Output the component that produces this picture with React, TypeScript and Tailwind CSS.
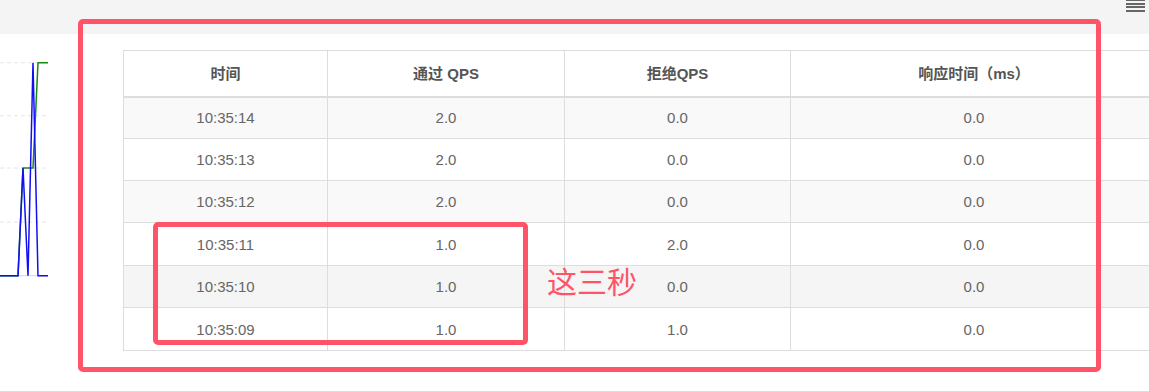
import React from 'react';

const rows = [
  { time: '10:35:14', pass: '2.0', block: '0.0', rt: '0.0', bg: 'bg-[#f9f9f9]', h: 'h-[42px]' },
  { time: '10:35:13', pass: '2.0', block: '0.0', rt: '0.0', bg: 'bg-white', h: 'h-[42px]' },
  { time: '10:35:12', pass: '2.0', block: '0.0', rt: '0.0', bg: 'bg-[#f9f9f9]', h: 'h-[42px]' },
  { time: '10:35:11', pass: '1.0', block: '2.0', rt: '0.0', bg: 'bg-white', h: 'h-[43px]' },
  { time: '10:35:10', pass: '1.0', block: '0.0', rt: '0.0', bg: 'bg-[#f5f5f5]', h: 'h-[42px]' },
  { time: '10:35:09', pass: '1.0', block: '1.0', rt: '0.0', bg: 'bg-white', h: 'h-[43px]' },
];

function MiniChart() {
  const grid = [12.7, 65.7, 118, 172];
  return (
    <svg width="48" height="240" viewBox="0 0 48 240" className="mt-[16px] shrink-0">
      {grid.map((y) => (
        <line key={y} x1="0" x2="48" y1={y} y2={y} stroke="#e6e6e6" strokeWidth="1" strokeDasharray="4 3" />
      ))}
      <line x1="0" x2="48" y1="225.7" y2="225.7" stroke="#ccd6eb" strokeWidth="1" />
      <path d="M0 225.7 L18 225.7 L23 118 L33 118 L38 12.7 L48 12.7" fill="none" stroke="#138a13" strokeWidth="1.5" />
      <path d="M0 225.7 L18 225.7 L23 118 L28 225.7 L33 12.7 L38 225.7 L48 225.7" fill="none" stroke="#1010f0" strokeWidth="1.5" />
    </svg>
  );
}

export default function App() {
  return (
    <div
      className="relative w-[1149px] h-[392px] overflow-hidden bg-white border-b border-[#dddddd] box-border"
      style={{ fontFamily: '"Liberation Sans", "Noto Sans CJK SC", sans-serif' }}
    >
      <div className="h-[34px] bg-[#f4f4f4] flex justify-end pr-[4px]">
        <div className="w-[19px] flex flex-col gap-[1.5px] -mt-[1px]">
          <div className="h-[2px] bg-[#666]" />
          <div className="h-[2px] bg-[#666]" />
          <div className="h-[2px] bg-[#666]" />
          <div className="h-[2px] bg-[#666]" />
        </div>
      </div>

      <div className="flex">
        <MiniChart />
        <div className="ml-[75px] mt-[16px] shrink-0">
          <table className="table-fixed w-[1034px] border-collapse border border-[#dddddd] text-[15px] text-[#666]">
            <colgroup>
              <col className="w-[204px]" />
              <col className="w-[237px]" />
              <col className="w-[226px]" />
              <col className="w-[367px]" />
            </colgroup>
            <thead>
              <tr className="h-[46px]">
                <th className="border border-[#dddddd] border-b-2 font-bold text-[#555] text-center align-middle leading-[21px]">时间</th>
                <th className="border border-[#dddddd] border-b-2 font-bold text-[#555] text-center align-middle leading-[21px]">通过 QPS</th>
                <th className="border border-[#dddddd] border-b-2 font-bold text-[#555] text-center align-middle leading-[21px]">拒绝QPS</th>
                <th className="border border-[#dddddd] border-b-2 font-bold text-[#555] text-center align-middle leading-[21px]">响应时间（ms）</th>
              </tr>
            </thead>
            <tbody>
              {rows.map((r) => (
                <tr key={r.time} className={`${r.bg} ${r.h}`}>
                  <td className="border border-[#dddddd] text-center align-middle leading-[21px]">{r.time}</td>
                  <td className="border border-[#dddddd] text-center align-middle leading-[21px]">{r.pass}</td>
                  <td className="border border-[#dddddd] text-center align-middle leading-[21px]">{r.block}</td>
                  <td className="border border-[#dddddd] text-center align-middle leading-[21px]">{r.rt}</td>
                </tr>
              ))}
            </tbody>
          </table>
        </div>
      </div>

      {/* annotation marks drawn over the screenshot */}
      <div className="absolute left-[78px] top-[19px] w-[1023px] h-[353px] border-[5px] border-[#ff5468] rounded-[5px]" />
      <div className="absolute left-[153px] top-[222px] w-[375px] h-[123px] border-[5px] border-[#ff5468] rounded-[5px]" />
      <div className="absolute left-[547px] top-[265px] text-[30px] leading-[36px] text-[#ff5468]">这三秒</div>
    </div>
  );
}
